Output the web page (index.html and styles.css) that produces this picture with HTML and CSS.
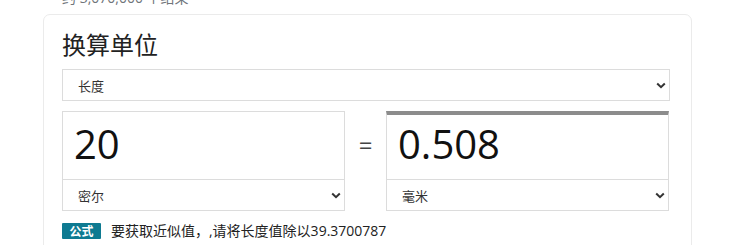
FILE: index.html
```html
<!DOCTYPE html>
<html lang="zh-CN">
<head>
<meta charset="utf-8">
<title>换算单位</title>
<link rel="stylesheet" href="styles.css">
</head>
<body>
<div class="count">约 3,070,000 个结果</div>
<div class="card">
  <h2 class="title">换算单位</h2>
  <div class="select wide">
    <span>长度</span>
    <svg class="chev" width="10" height="7" viewBox="0 0 10 7"><path d="M1.2 1.5 L5 5.2 L8.8 1.5" fill="none" stroke="#333" stroke-width="2"/></svg>
  </div>
  <div class="convert">
    <div class="col">
      <div class="value">20</div>
      <div class="select">
        <span>密尔</span>
        <svg class="chev" width="10" height="7" viewBox="0 0 10 7"><path d="M1.2 1.5 L5 5.2 L8.8 1.5" fill="none" stroke="#333" stroke-width="2"/></svg>
      </div>
    </div>
    <div class="eq">=</div>
    <div class="col">
      <div class="value result">0.508</div>
      <div class="select">
        <span>毫米</span>
        <svg class="chev" width="10" height="7" viewBox="0 0 10 7"><path d="M1.2 1.5 L5 5.2 L8.8 1.5" fill="none" stroke="#333" stroke-width="2"/></svg>
      </div>
    </div>
  </div>
  <div class="formula">
    <span class="badge">公式</span>
    <span class="ftext">要获取近似值，,请将长度值除以39.3700787</span>
  </div>
</div>
</body>
</html>
```

FILE: styles.css
```css
* { box-sizing: border-box; }
body {
  margin: 0;
  background: #fff;
  font-family: "Open Sans", "Noto Sans CJK SC", sans-serif;
  color: #222;
  overflow: hidden;
}
.count {
  margin: -11px 0 0 62px;
  font-size: 14px;
  line-height: 18px;
  color: #70757a;
}
.card {
  margin: 7px 0 0 43px;
  width: 649px;
  height: 240px;
  border: 1px solid #ebebeb;
  border-radius: 7px;
  padding: 14px 20px 0 18px;
}
.title {
  margin: 0;
  font-family: "Noto Sans CJK SC", sans-serif;
  font-weight: 400;
  font-size: 24px;
  line-height: 30px;
  color: #222;
}
.select {
  display: flex;
  align-items: center;
  justify-content: space-between;
  height: 31px;
  border: 1px solid #dcdcdc;
  border-top: 0;
  padding: 0 3px 0 15px;
  font-family: "Noto Sans CJK SC", sans-serif;
  font-size: 13px;
  color: #333;
  background: #fff;
}
.select.wide {
  margin-top: 10px;
  width: 608px;
  height: 32px;
  border-top: 1px solid #dcdcdc;
}
.chev { display: block; }
.convert {
  display: flex;
  margin-top: 10px;
  width: 607px;
}
.col { width: 283px; }
.value {
  height: 69px;
  border: 1px solid #dcdcdc;
  padding: 0 0 4px 11px;
  font-size: 40px;
  line-height: 63px;
  color: #111;
}
.value.result {
  border-top: 4px solid #8c8c8c;
  line-height: 58px;
  padding-bottom: 6px;
}
.eq {
  width: 41px;
  height: 69px;
  display: flex;
  align-items: center;
  justify-content: center;
  font-size: 24px;
  color: #444;
  padding-bottom: 2px;
}
.formula {
  display: flex;
  align-items: center;
  gap: 10px;
  margin-top: 11px;
}
.badge {
  display: inline-block;
  width: 39px;
  height: 16px;
  background: #0e7a91;
  color: #fff;
  font-family: "Noto Sans CJK SC", sans-serif;
  font-weight: 700;
  font-size: 12px;
  line-height: 16px;
  text-align: center;
  border-radius: 1px;
}
.ftext {
  font-size: 14px;
  line-height: 18px;
  color: #222;
}
```
